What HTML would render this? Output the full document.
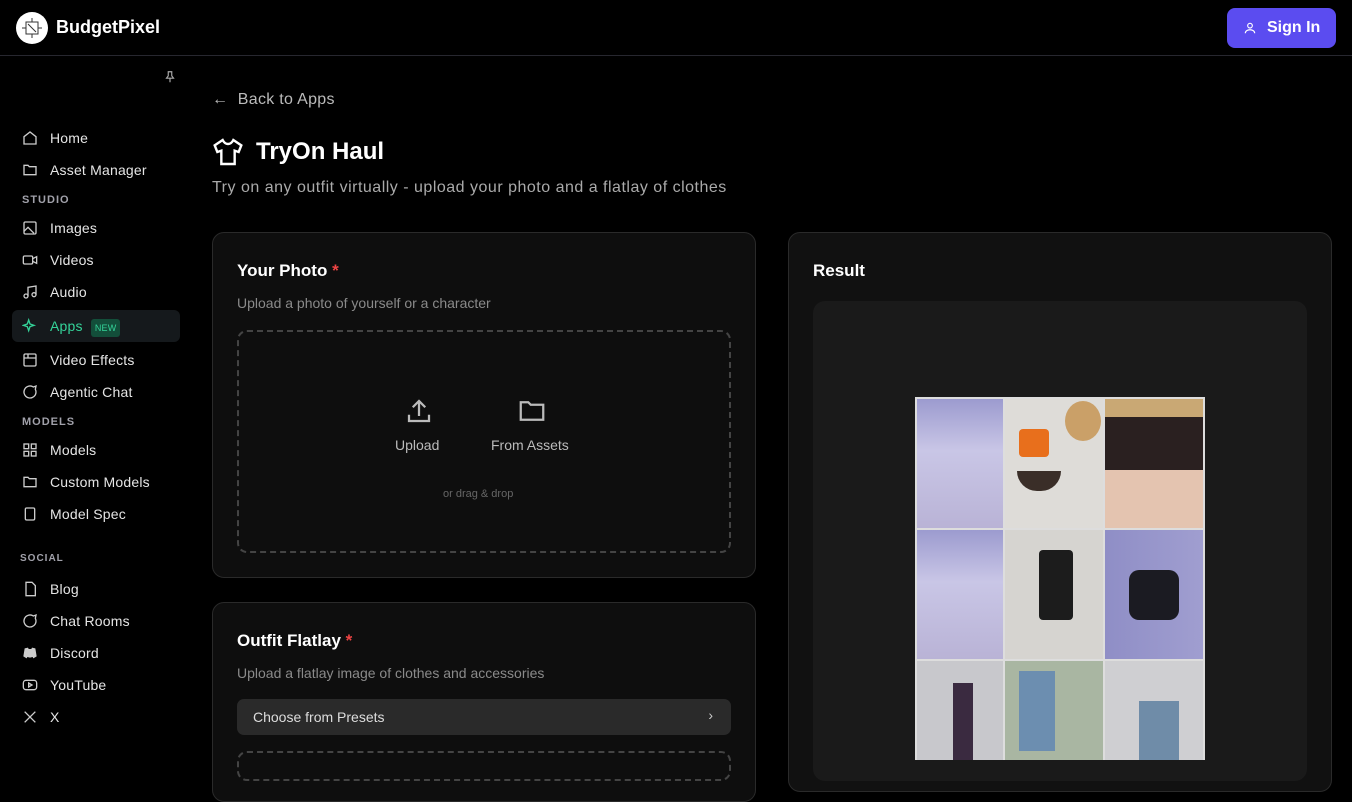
<!DOCTYPE html>
<html><head><style>
*{box-sizing:border-box;margin:0;padding:0}
body{width:1352px;height:760px;overflow:hidden;background:#000;font-family:"Liberation Sans",sans-serif;color:#e5e5e5;position:relative}
.top{position:absolute;left:0;top:0;width:1352px;height:56px;border-bottom:1px solid #27272f}
.logo{position:absolute;left:16px;top:12px;width:32px;height:32px;border-radius:50%;background:#fff}
.brand{position:absolute;left:56px;top:17px;font-size:18px;font-weight:bold;color:#fff}
.sign{position:absolute;left:1227px;top:8px;width:109px;height:40px;border-radius:8px;background:#5b4cf0;color:#fff;font-size:16px;font-weight:bold;padding:11px 0 0 40px}
.nav{position:absolute;left:22px;font-size:14px;color:#e5e5e5;letter-spacing:.2px}
.nav svg{position:absolute;left:0;top:0}
.nav span{position:absolute;left:28px;top:0;white-space:nowrap}
.sec{position:absolute;left:22px;font-size:11px;letter-spacing:1px;color:#a1a1aa;font-weight:bold}
.card{position:absolute;background:#0e0e0e;border:1px solid #2a2a2a;border-radius:12px}
.h{position:absolute;font-size:17px;font-weight:bold;color:#fff}
.sub{position:absolute;font-size:14px;color:#8a8a8a}
.cell{position:absolute}
</style></head><body>
<div class="top">
<div class="logo"><svg width="32" height="32" viewBox="0 0 32 32" fill="none" stroke="#333" stroke-width="1"><rect x="10" y="10" width="12" height="12"/><path d="M6 16h4M22 16h4M16 6v4M16 22v4M12 12l8 8"/></svg></div>
<div class="brand">BudgetPixel</div>
<div class="sign"><svg style="position:absolute;left:16px;top:13px" width="14" height="14" viewBox="0 0 24 24" fill="none" stroke="#fff" stroke-width="2"><circle cx="12" cy="8" r="4"/><path d="M4 21c0-4 4-6 8-6s8 2 8 6"/></svg>Sign In</div>
</div>
<svg style="position:absolute;left:163px;top:70px" width="14" height="14" viewBox="0 0 24 24" fill="none" stroke="#aaa" stroke-width="2"><path d="M8 3h8M9 3v7l-3 4h12l-3-4V3M12 14v7"/></svg>
<div style="position:absolute;left:12px;top:310px;width:168px;height:32px;background:#15191c;border-radius:6px"></div>
<div class="nav" style="top:130px"><svg width="16" height="16" viewBox="0 0 24 24" fill="none" stroke="#ccc" stroke-width="2"><path d="M3 10l9-7 9 7v11H3z"/></svg><span>Home</span></div>
<div class="nav" style="top:162px"><svg width="16" height="16" viewBox="0 0 24 24" fill="none" stroke="#ccc" stroke-width="2"><path d="M3 5h6l2 2h10v12H3z"/></svg><span>Asset Manager</span></div>
<div class="sec" style="top:194px">STUDIO</div>
<div class="nav" style="top:220px"><svg width="16" height="16" viewBox="0 0 24 24" fill="none" stroke="#ccc" stroke-width="2"><rect x="3" y="3" width="18" height="18" rx="2"/><path d="M3 17l6-6 9 9"/></svg><span>Images</span></div>
<div class="nav" style="top:252px"><svg width="16" height="16" viewBox="0 0 24 24" fill="none" stroke="#ccc" stroke-width="2"><rect x="2" y="6" width="14" height="12" rx="2"/><path d="M16 10l6-3v10l-6-3"/></svg><span>Videos</span></div>
<div class="nav" style="top:284px"><svg width="16" height="16" viewBox="0 0 24 24" fill="none" stroke="#ccc" stroke-width="2"><path d="M9 18V5l12-2v13"/><circle cx="6" cy="18" r="3"/><circle cx="18" cy="16" r="3"/></svg><span>Audio</span></div>
<div class="nav" style="top:318px;color:#34d399"><svg width="16" height="16" viewBox="0 0 24 24" fill="none" stroke="#34d399" stroke-width="2"><path d="M10 3l2 6 6 2-6 2-2 6-2-6-6-2 6-2z"/></svg><span>Apps <b style="font-size:9px;background:#134e3a;padding:4px 4px;border-radius:3px;margin-left:4px;font-weight:normal">NEW</b></span></div>
<div class="nav" style="top:352px"><svg width="16" height="16" viewBox="0 0 24 24" fill="none" stroke="#ccc" stroke-width="2"><rect x="3" y="3" width="18" height="18" rx="2"/><path d="M3 9h18M9 3v6"/></svg><span>Video Effects</span></div>
<div class="nav" style="top:384px"><svg width="16" height="16" viewBox="0 0 24 24" fill="none" stroke="#ccc" stroke-width="2"><path d="M21 12a9 9 0 1 1-4-7.5L21 3l-1 5a9 9 0 0 1 1 4z"/></svg><span>Agentic Chat</span></div>
<div class="sec" style="top:416px">MODELS</div>
<div class="nav" style="top:442px"><svg width="16" height="16" viewBox="0 0 24 24" fill="none" stroke="#ccc" stroke-width="2"><rect x="3" y="3" width="7" height="7"/><rect x="14" y="3" width="7" height="7"/><rect x="3" y="14" width="7" height="7"/><rect x="14" y="14" width="7" height="7"/></svg><span>Models</span></div>
<div class="nav" style="top:474px"><svg width="16" height="16" viewBox="0 0 24 24" fill="none" stroke="#ccc" stroke-width="2"><path d="M3 5h6l2 2h10v12H3z"/></svg><span>Custom Models</span></div>
<div class="nav" style="top:506px"><svg width="16" height="16" viewBox="0 0 24 24" fill="none" stroke="#ccc" stroke-width="2"><rect x="5" y="3" width="14" height="18" rx="2"/></svg><span>Model Spec</span></div>
<div class="sec" style="top:553px;left:20px;font-size:10px">SOCIAL</div>
<div class="nav" style="top:581px"><svg width="16" height="16" viewBox="0 0 24 24" fill="none" stroke="#ccc" stroke-width="2"><path d="M6 2h9l5 5v15H6z"/></svg><span>Blog</span></div>
<div class="nav" style="top:613px"><svg width="16" height="16" viewBox="0 0 24 24" fill="none" stroke="#ccc" stroke-width="2"><path d="M21 12a9 9 0 1 1-4-7.5L21 3l-1 5a9 9 0 0 1 1 4z"/></svg><span>Chat Rooms</span></div>
<div class="nav" style="top:645px"><svg width="16" height="16" viewBox="0 0 24 24"><path fill="#ccc" d="M4 5l5-1 1 2h4l1-2 5 1 2 12-5 3-1-2-4 1-4-1-1 2-5-3z"/></svg><span>Discord</span></div>
<div class="nav" style="top:677px"><svg width="16" height="16" viewBox="0 0 24 24" fill="none" stroke="#ccc" stroke-width="2"><rect x="2" y="5" width="20" height="14" rx="4"/><path d="M10 9l5 3-5 3z"/></svg><span>YouTube</span></div>
<div class="nav" style="top:709px"><svg width="16" height="16" viewBox="0 0 24 24" fill="none" stroke="#ccc" stroke-width="2"><path d="M4 4l16 16M20 4L4 20"/></svg><span>X</span></div>

<div style="position:absolute;left:212px;top:91px;font-size:16px;color:#bbb;letter-spacing:.3px">← &nbsp;Back to Apps</div>
<svg style="position:absolute;left:212px;top:136px" width="32" height="32" viewBox="0 0 24 24" fill="none" stroke="#fff" stroke-width="1.8"><path d="M8 3l-6 4 2 5 3-1v10h10V11l3 1 2-5-6-4c-1 2-2 3-4 3s-3-1-4-3z"/></svg>
<div style="position:absolute;left:256px;top:138px;font-size:24px;font-weight:bold;color:#fff">TryOn Haul</div>
<div style="position:absolute;left:212px;top:179px;font-size:16px;color:#aaa;letter-spacing:.5px">Try on any outfit virtually - upload your photo and a flatlay of clothes</div>

<div class="card" style="left:212px;top:232px;width:544px;height:346px"></div>
<div class="h" style="left:237px;top:261px">Your Photo <span style="color:#ef4444">*</span></div>
<div class="sub" style="left:237px;top:295px">Upload a photo of yourself or a character</div>
<div style="position:absolute;left:237px;top:330px;width:494px;height:223px;border:2px dashed #444;border-radius:10px"></div>
<svg style="position:absolute;left:404px;top:396px" width="30" height="30" viewBox="0 0 24 24" fill="none" stroke="#bbb" stroke-width="1.8"><path d="M4 15v5h16v-5M12 16V4M7 9l5-5 5 5"/></svg>
<div style="position:absolute;left:395px;top:437px;font-size:14px;color:#bbb">Upload</div>
<svg style="position:absolute;left:516px;top:396px" width="32" height="30" viewBox="0 0 24 24" fill="none" stroke="#bbb" stroke-width="1.8"><path d="M3 5h6l2 2h10v12H3z"/></svg>
<div style="position:absolute;left:491px;top:437px;font-size:14px;color:#bbb">From Assets</div>
<div style="position:absolute;left:443px;top:488px;font-size:11px;color:#666">or drag &amp; drop</div>

<div class="card" style="left:212px;top:602px;width:544px;height:200px"></div>
<div class="h" style="left:237px;top:631px">Outfit Flatlay <span style="color:#ef4444">*</span></div>
<div class="sub" style="left:237px;top:665px">Upload a flatlay image of clothes and accessories</div>
<div style="position:absolute;left:237px;top:699px;width:494px;height:36px;background:#2a2a2a;border-radius:7px;font-size:14px;color:#ddd;padding:10px 16px">Choose from Presets<span style="position:absolute;right:18px;top:8px;color:#ccc">›</span></div>
<div style="position:absolute;left:237px;top:751px;width:494px;height:30px;border:2px dashed #444;border-radius:10px"></div>

<div class="card" style="left:788px;top:232px;width:544px;height:560px;background:#111"></div>
<div class="h" style="left:813px;top:261px">Result</div>
<div style="position:absolute;left:813px;top:301px;width:494px;height:480px;background:#1a1a1a;border-radius:12px"></div>
<div style="position:absolute;left:915px;top:397px;width:290px;height:363px;background:#ddd">
<div class="cell" style="left:2px;top:2px;width:86px;height:129px;background:linear-gradient(#9c9bcf,#c9c6e6 40%,#b9b3d6)"></div>
<div class="cell" style="left:90px;top:2px;width:98px;height:129px;background:#dedcd8"><div style="position:absolute;left:14px;top:30px;width:30px;height:28px;background:#e86f1c;border-radius:4px"></div><div style="position:absolute;left:12px;top:72px;width:44px;height:20px;background:#3a2e28;border-radius:0 0 20px 20px"></div><div style="position:absolute;left:60px;top:2px;width:36px;height:40px;background:#caa068;border-radius:50%"></div></div>
<div class="cell" style="left:190px;top:2px;width:98px;height:129px;background:linear-gradient(#c9a874 0 14%,#2a2020 14% 55%,#e4c4b0 55%)"></div>
<div class="cell" style="left:2px;top:133px;width:86px;height:129px;background:linear-gradient(#9c9bcf,#c9c6e6 40%,#b9b3d6)"></div>
<div class="cell" style="left:90px;top:133px;width:98px;height:129px;background:#d6d4d0"><div style="position:absolute;left:34px;top:20px;width:34px;height:70px;background:#1c1c1c;border-radius:4px"></div></div>
<div class="cell" style="left:190px;top:133px;width:98px;height:129px;background:linear-gradient(90deg,#8f8ec6,#a09ed0)"><div style="position:absolute;left:24px;top:40px;width:50px;height:50px;background:#1b1b22;border-radius:10px"></div></div>
<div class="cell" style="left:2px;top:264px;width:86px;height:99px;background:#c8c8cc"><div style="position:absolute;left:36px;top:22px;width:20px;height:77px;background:#3a2a40"></div></div>
<div class="cell" style="left:90px;top:264px;width:98px;height:99px;background:#a9b6a2"><div style="position:absolute;left:14px;top:10px;width:36px;height:80px;background:#6c8eb0"></div></div>
<div class="cell" style="left:190px;top:264px;width:98px;height:99px;background:#cfcfd2"><div style="position:absolute;left:34px;top:40px;width:40px;height:59px;background:#6f8ca8"></div></div>
</div>
</body></html>
